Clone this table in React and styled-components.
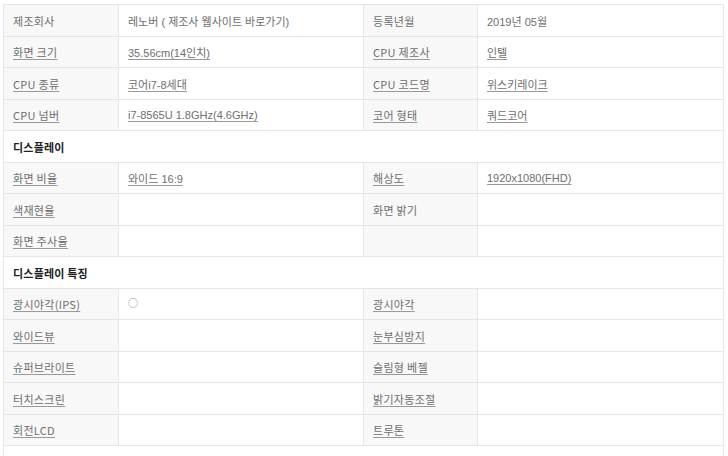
import React from "react";
import styled, { createGlobalStyle } from "styled-components";

const GlobalStyle = createGlobalStyle`
  body {
    margin: 0;
    background: #fff;
    font-family: "Noto Sans CJK KR", "Noto Sans", sans-serif;
  }
`;

const Wrapper = styled.div`
  padding: 4px 4px 0 3px;
`;

const SpecTable = styled.div`
  display: grid;
  grid-template-columns: 115px 245px 114px 1fr;
  border-left: 1px solid #e6e6e6;
  border-top: 1px solid #e6e6e6;
`;

const Cell = styled.div`
  box-sizing: border-box;
  display: flex;
  align-items: center;
  padding-left: 9px;
  border-right: 1px solid #e6e6e6;
  border-bottom: 1px solid #e6e6e6;
  background: ${(p) => (p.$label ? "#f8f8f8" : "#fff")};
  font-family: ${(p) =>
    p.$label
      ? `"Noto Sans CJK KR", sans-serif`
      : `"Liberation Sans", "Noto Sans CJK KR", sans-serif`};
  font-size: 11px;
  letter-spacing: ${(p) => (p.$label ? "0.3px" : "0")};
  color: #6e6e6e;
  white-space: nowrap;
  height: ${(p) => p.$h}px;
`;

const SectionHead = styled(Cell)`
  grid-column: 1 / -1;
  background: #fff;
  color: #222;
  font-family: "Noto Sans CJK KR", sans-serif;
  font-weight: bold;
  letter-spacing: 0.2px;
`;

const Link = styled.span`
  text-decoration: underline;
  text-decoration-color: #999;
  text-underline-offset: 2px;
  cursor: pointer;
`;

const Mark = styled.span`
  font-family: "Noto Sans CJK KR", sans-serif;
  font-size: 10px;
  color: #888;
  margin-top: -4px;
`;

const T = ({ text, link }) => (text ? link ? <Link>{text}</Link> : <span>{text}</span> : null);

const sections = [
  {
    rows: [
      [["제조회사"], ["레노버 ( 제조사 웹사이트 바로가기)"], ["등록년월"], ["2019년 05월"]],
      [["화면 크기", 1], ["35.56cm(14인치)", 1], ["CPU 제조사", 1], ["인텔", 1]],
      [["CPU 종류", 1], ["코어i7-8세대", 1], ["CPU 코드명", 1], ["위스키레이크", 1]],
      [["CPU 넘버", 1], ["i7-8565U 1.8GHz(4.6GHz)", 1], ["코어 형태", 1], ["쿼드코어", 1]],
    ],
  },
  {
    title: "디스플레이",
    rows: [
      [["화면 비율", 1], ["와이드 16:9", 1], ["해상도", 1], ["1920x1080(FHD)", 1]],
      [["색재현율", 1], [""], ["화면 밝기"], [""]],
      [["화면 주사율", 1], [""], [""], [""]],
    ],
  },
  {
    title: "디스플레이 특징",
    rows: [
      [["광시야각(IPS)", 1], ["○", 0, 1], ["광시야각", 1], [""]],
      [["와이드뷰", 1], [""], ["눈부심방지", 1], [""]],
      [["슈퍼브라이트", 1], [""], ["슬림형 베젤", 1], [""]],
      [["터치스크린", 1], [""], ["밝기자동조절", 1], [""]],
      [["회전LCD", 1], [""], ["트루톤", 1], [""]],
    ],
  },
  // next section starts just below the fold
  { title: "", rows: [] },
];

// row pitch in the shot is ~31.6px, so alternate 32/31
let rowIndex = 0;
const nextHeight = () => {
  rowIndex += 1;
  return rowIndex % 2 === 1 ? 32 : 31;
};

export default function App() {
  rowIndex = 0;
  return (
    <Wrapper>
      <GlobalStyle />
      <SpecTable>
        {sections.map((section, si) => {
          const out = [];
          if (section.title !== undefined) {
            out.push(
              <SectionHead key={`h${si}`} $h={nextHeight()}>
                {section.title}
              </SectionHead>
            );
          }
          section.rows.forEach((row, ri) => {
            const h = nextHeight();
            row.forEach(([text, link, mark], ci) => {
              out.push(
                <Cell key={`${si}-${ri}-${ci}`} $label={ci % 2 === 0} $h={h}>
                  {mark ? <Mark>{text}</Mark> : <T text={text} link={link} />}
                </Cell>
              );
            });
          });
          return out;
        })}
      </SpecTable>
    </Wrapper>
  );
}
